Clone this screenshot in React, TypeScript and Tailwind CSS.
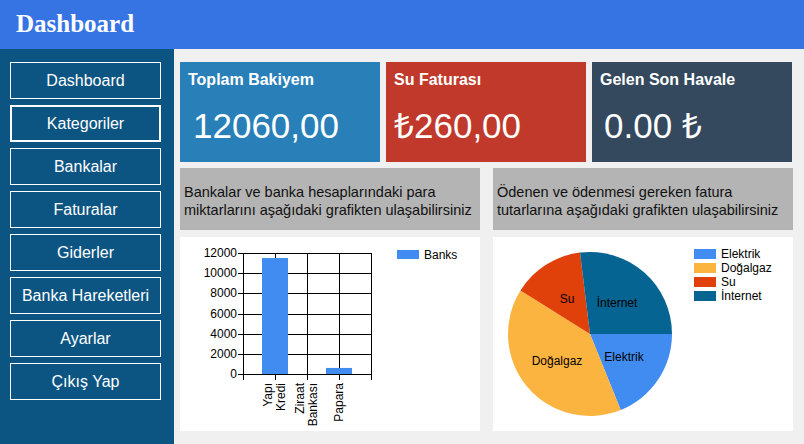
const menu = [
  "Dashboard",
  "Kategoriler",
  "Bankalar",
  "Faturalar",
  "Giderler",
  "Banka Hareketleri",
  "Ayarlar",
  "Çıkış Yap",
];

const cards = [
  { title: "Toplam Bakiyem", value: "12060,00", bg: "bg-[#2980b9]", pad: "pl-[13px]" },
  { title: "Su Faturası", value: "₺260,00", bg: "bg-[#c0392b]", pad: "pl-[8px]" },
  { title: "Gelen Son Havale", value: "0.00 ₺", bg: "bg-[#34495e]", pad: "pl-[12px]" },
];

const banks = [
  { lines: ["Yapı", "Kredi"], value: 11500 },
  { lines: ["Ziraat", "Bankası"], value: 0 },
  { lines: ["Papara"], value: 600 },
];

const slices = [
  { name: "Elektrik", from: 0, to: 68, color: "#418cf0", lx: 131, ly: 120 },
  { name: "Doğalgaz", from: 68, to: 212, color: "#fcb441", lx: 64, ly: 124 },
  { name: "Su", from: 212, to: 263, color: "#e0400a", lx: 74, ly: 62 },
  { name: "İnternet", from: 263, to: 360, color: "#056492", lx: 124, ly: 66 },
];

function BarChart() {
  const left = 63;
  const right = 191;
  const top = 16;
  const bottom = 137;
  const y = (v: number) => bottom - (v / 12000) * (bottom - top);
  const ticks = [0, 2000, 4000, 6000, 8000, 10000, 12000];
  const cols = [95, 127, 159];

  return (
    <svg width="300" height="194" className="block">
      <g stroke="#000" strokeWidth="1" shapeRendering="crispEdges">
        {ticks.map((t) => (
          <line key={t} x1={left - 5} x2={right} y1={Math.round(y(t)) + 0.5} y2={Math.round(y(t)) + 0.5} />
        ))}
        {[left, ...cols, right].map((x) => (
          <line key={x} x1={x + 0.5} x2={x + 0.5} y1={top} y2={bottom + 6} />
        ))}
      </g>
      {banks.map((b, i) => (
        <rect
          key={i}
          x={cols[i] - 13}
          y={y(b.value)}
          width="26"
          height={bottom - y(b.value)}
          fill="#418cf0"
        />
      ))}
      <g fontSize="12" fill="#000" fontFamily="'Liberation Sans', Arial, sans-serif">
        {ticks.map((t) => (
          <text key={t} x="57" y={y(t)} textAnchor="end" dominantBaseline="central">
            {t}
          </text>
        ))}
        {banks.map((b, i) =>
          b.lines.map((line, j) => {
            const x = cols[i] + (b.lines.length === 1 ? -0.5 : j === 0 ? -7 : 6);
            return (
              <text
                key={line}
                transform={`translate(${x},146) rotate(-90)`}
                textAnchor="end"
                dominantBaseline="central"
              >
                {line}
              </text>
            );
          })
        )}
        <rect x="217" y="13" width="22" height="9" fill="#418cf0" />
        <text x="244" y="18" dominantBaseline="central">Banks</text>
      </g>
    </svg>
  );
}

function PieChart() {
  const cx = 97;
  const cy = 97;
  const r = 82;
  const pt = (deg: number) => {
    const a = (deg * Math.PI) / 180;
    return `${cx + r * Math.cos(a)} ${cy + r * Math.sin(a)}`;
  };

  return (
    <svg width="300" height="194" className="block">
      {slices.map((s) => (
        <path
          key={s.name}
          d={`M ${cx} ${cy} L ${pt(s.from)} A ${r} ${r} 0 ${s.to - s.from > 180 ? 1 : 0} 1 ${pt(s.to)} Z`}
          fill={s.color}
        />
      ))}
      <g fontSize="12" fill="#000" fontFamily="'Liberation Sans', Arial, sans-serif">
        {slices.map((s) => (
          <text key={s.name} x={s.lx} y={s.ly} textAnchor="middle" dominantBaseline="central">
            {s.name}
          </text>
        ))}
        {slices.map((s, i) => (
          <g key={s.name}>
            <rect x="201" y={12 + i * 14} width="22" height="10" fill={s.color} />
            <text x="228" y={17 + i * 14} dominantBaseline="central">
              {s.name}
            </text>
          </g>
        ))}
      </g>
    </svg>
  );
}

export default function App() {
  return (
    <div className="w-[804px] h-[444px] flex flex-col bg-[#f0f0f0] overflow-hidden font-['Liberation_Sans',Arial,sans-serif]">
      {/* Header */}
      <header className="h-[49px] shrink-0 bg-[#3674e3] pl-4 pt-[11px]">
        <h1 className="text-white text-[25px] leading-none font-bold font-['Liberation_Serif',serif]">
          Dashboard
        </h1>
      </header>

      <div className="flex-1 flex">
        {/* Sidebar */}
        <aside className="w-[174px] shrink-0 bg-[#0c5583] pt-[13px] pl-[10px] flex flex-col gap-[6px]">
          {menu.map((item) => (
            <button
              key={item}
              className={`w-[151px] h-[37px] flex items-center justify-center text-white text-[16px] border-white ${
                item === "Kategoriler" ? "border-2" : "border"
              }`}
            >
              {item}
            </button>
          ))}
        </aside>

        {/* Main */}
        <main className="flex-1 pt-[13px] pl-[6px] flex flex-col">
          <div className="flex gap-[6px]">
            {cards.map((c) => (
              <div key={c.title} className={`w-[200px] h-[100px] ${c.bg} text-white pt-[9px]`}>
                <div className="pl-2 text-[16px] leading-[18px] font-bold">{c.title}</div>
                <div className={`${c.pad} mt-[19px] text-[35px] leading-[35px]`}>{c.value}</div>
              </div>
            ))}
          </div>

          <div className="mt-[6px] flex gap-[13px]">
            <div className="w-[300px] h-[62px] bg-[#b4b4b4] pl-1 pt-[5px] flex items-center text-[14.5px] leading-[17.5px] text-[#111]">
              <p>
                Bankalar ve banka hesaplarındaki para
                <br />
                miktarlarını aşağıdaki grafikten ulaşabilirsiniz
              </p>
            </div>
            <div className="w-[300px] h-[62px] bg-[#b4b4b4] pl-1 pt-[5px] flex items-center text-[14.5px] leading-[17.5px] text-[#111]">
              <p>
                Ödenen ve ödenmesi gereken fatura
                <br />
                tutarlarına aşağıdaki grafikten ulaşabilirsiniz
              </p>
            </div>
          </div>

          <div className="mt-[7px] flex gap-[13px]">
            <div className="w-[300px] h-[194px] bg-white">
              <BarChart />
            </div>
            <div className="w-[300px] h-[194px] bg-white">
              <PieChart />
            </div>
          </div>
        </main>
      </div>
    </div>
  );
}
